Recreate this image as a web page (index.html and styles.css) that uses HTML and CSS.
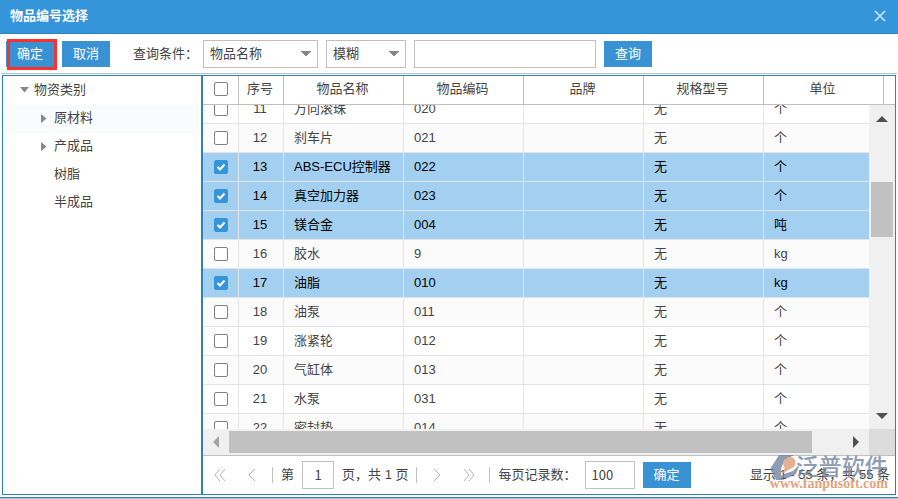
FILE: index.html
```html
<!DOCTYPE html>
<html lang="zh-CN">
<head>
<meta charset="utf-8">
<title>物品编号选择</title>
<link rel="stylesheet" href="styles.css">
</head>
<body>
<div class="dialog">
  <header class="titlebar">
    <h1>物品编号选择</h1>
    <button class="close" aria-label="关闭"><svg width="12" height="12" viewBox="0 0 12 12"><path d="M1 1 11 11M11 1 1 11" fill="none" stroke="#cfe6f8" stroke-width="1.6"/></svg></button>
  </header>

  <form class="toolbar">
    <div class="actions">
      <button type="button" class="btn marked">确定</button>
      <button type="button" class="btn">取消</button>
    </div>
    <label for="field">查询条件：</label>
    <select id="field" class="box field"><option>物品名称</option></select>
    <select class="box mode" aria-label="匹配方式"><option>模糊</option></select>
    <input class="box keyword" type="text" aria-label="关键字">
    <button type="button" class="btn">查询</button>
  </form>

  <main class="panes">
    <nav class="tree">
      <ul>
        <li class="root"><svg class="open" viewBox="0 0 9 6"><path d="M0 0h9L4.500 5.500z"/></svg>物资类别</li>
        <li class="current"><svg class="shut" viewBox="0 0 6 9"><path d="M0 0v9L5.500 4.500z"/></svg>原材料</li>
        <li><svg class="shut" viewBox="0 0 6 9"><path d="M0 0v9L5.500 4.500z"/></svg>产成品</li>
        <li class="leaf">树脂</li>
        <li class="leaf">半成品</li>
      </ul>
    </nav>

    <section class="grid">
      <div class="head">
        <table>
          <colgroup><col class="c-check"><col class="c-no"><col><col><col><col><col></colgroup>
          <thead><tr><th><input type="checkbox" aria-label="全选"></th><th>序号</th><th>物品名称</th><th>物品编码</th><th>品牌</th><th>规格型号</th><th>单位</th></tr></thead>
        </table>
      </div>
      <div class="body">
        <div class="rows">
          <table>
            <colgroup><col class="c-check"><col class="c-no"><col><col><col><col><col></colgroup>
            <tbody>
              <tr><td><input type="checkbox" aria-label="11"></td><td>11</td><td>万向滚珠</td><td>020</td><td></td><td>无</td><td>个</td></tr>
              <tr><td><input type="checkbox" aria-label="12"></td><td>12</td><td>刹车片</td><td>021</td><td></td><td>无</td><td>个</td></tr>
              <tr class="on"><td><input type="checkbox" aria-label="13" checked></td><td>13</td><td>ABS-ECU控制器</td><td>022</td><td></td><td>无</td><td>个</td></tr>
              <tr class="on"><td><input type="checkbox" aria-label="14" checked></td><td>14</td><td>真空加力器</td><td>023</td><td></td><td>无</td><td>个</td></tr>
              <tr class="on"><td><input type="checkbox" aria-label="15" checked></td><td>15</td><td>镁合金</td><td>004</td><td></td><td>无</td><td>吨</td></tr>
              <tr><td><input type="checkbox" aria-label="16"></td><td>16</td><td>胶水</td><td>9</td><td></td><td>无</td><td>kg</td></tr>
              <tr class="on"><td><input type="checkbox" aria-label="17" checked></td><td>17</td><td>油脂</td><td>010</td><td></td><td>无</td><td>kg</td></tr>
              <tr><td><input type="checkbox" aria-label="18"></td><td>18</td><td>油泵</td><td>011</td><td></td><td>无</td><td>个</td></tr>
              <tr><td><input type="checkbox" aria-label="19"></td><td>19</td><td>涨紧轮</td><td>012</td><td></td><td>无</td><td>个</td></tr>
              <tr><td><input type="checkbox" aria-label="20"></td><td>20</td><td>气缸体</td><td>013</td><td></td><td>无</td><td>个</td></tr>
              <tr><td><input type="checkbox" aria-label="21"></td><td>21</td><td>水泵</td><td>031</td><td></td><td>无</td><td>个</td></tr>
              <tr><td><input type="checkbox" aria-label="22"></td><td>22</td><td>密封垫</td><td>014</td><td></td><td>无</td><td>个</td></tr>
            </tbody>
          </table>
        </div>
        <div class="vbar">
          <svg width="12" height="6" viewBox="0 0 12 6"><path d="M0 6h12L6 0z"/></svg>
          <div class="vtrack"><div class="vthumb"></div></div>
          <svg width="12" height="6" viewBox="0 0 12 6"><path d="M0 0h12L6 6z"/></svg>
        </div>
        <div class="hbar">
          <svg width="6" height="12" viewBox="0 0 6 12"><path d="M6 0v12L0 6z" fill="#a3a3a3"/></svg>
          <div class="htrack"><div class="hthumb"></div></div>
          <svg width="6" height="12" viewBox="0 0 6 12"><path d="M0 0v12L6 6z"/></svg>
        </div>
        <div class="corner"></div>
      </div>

      <footer class="pager">
        <button class="nav" aria-label="首页"><svg width="12" height="12" viewBox="0 0 12 12"><path d="M6 0 1 6l5 6M11 0 6 6l5 6"/></svg></button>
        <button class="nav" aria-label="上一页"><svg width="12" height="12" viewBox="0 0 12 12"><path d="M9 0 3 6l6 6"/></svg></button>
        <i class="sep"></i>
        <label for="page">第</label>
        <input id="page" class="box page" type="text" value="1">
        <span>页，共 1 页</span>
        <i class="sep"></i>
        <button class="nav" aria-label="下一页"><svg width="12" height="12" viewBox="0 0 12 12"><path d="M3 0l6 6-6 6"/></svg></button>
        <button class="nav" aria-label="末页"><svg width="12" height="12" viewBox="0 0 12 12"><path d="M1 0l5 6-5 6M6 0l5 6-5 6"/></svg></button>
        <i class="sep"></i>
        <label for="size">每页记录数：</label>
        <input id="size" class="box size" type="text" value="100">
        <button class="btn">确定</button>
        <span class="total">显示 1 - 55 条，共 55 条</span>
        <div class="brand">
          <svg width="32" height="28" viewBox="0 0 32 28"><path d="M9 0h15Q13 5 11 14q-1 6 3 11H6L0 14z" fill="#7484a3"/><path d="M14 5Q22-1 25 5q2 7-5 9l-10 6q6-6 4-9-2-3 0-6z" fill="#e29c78"/><path d="M30 9l-4 10-8 4H10l4-4 9-3z" fill="#7484a3"/></svg>
          <b>泛普软件</b>
          <small>www.fanpusoft.com</small>
        </div>
      </footer>
    </section>
  </main>
</div>
</body>
</html>
```
FILE: styles.css
```css
* { box-sizing: border-box; }

body {
  margin: 0;
  background: #fff;
  color: #444;
  font: 13px/20px "Liberation Sans", "Noto Sans CJK SC", sans-serif;
}

button, input, select { font: inherit; color: inherit; margin: 0; }

.dialog {
  display: flex;
  flex-direction: column;
  height: 100vh;
  border-bottom: 1px solid #c0c4c8;
}

.titlebar {
  display: flex;
  align-items: center;
  justify-content: space-between;
  height: 34px;
  padding: 0 12px 2px 10px;
  background: #3595db;
  border-bottom: 1px solid #2d81be;
  color: #fff;
}
.titlebar h1 { margin: 0; font-size: 13px; line-height: 20px; }
.close { display: flex; padding: 0; border: 0; background: none; }

.toolbar {
  display: flex;
  align-items: center;
  gap: 8px;
  height: 40px;
  margin: 0 1px;
  padding: 0 5px;
  border-bottom: 1px solid #c0c0c0;
}
.actions { display: flex; gap: 8px; margin-right: 15px; }
.toolbar label { width: 62px; white-space: nowrap; }

.btn {
  width: 48px;
  height: 26px;
  padding: 0;
  border: 0;
  background: #3892d4;
  color: #fff;
}
.marked { position: relative; }
.marked::after {
  content: "";
  position: absolute;
  inset: -2px -3px -3px 1px;
  border: 3px solid #f9312f;
}

.box {
  height: 28px;
  padding: 0 6px;
  border: 1px solid #c0c0c0;
  border-radius: 0;
  background: #fff;
  outline: 0;
}
select.box {
  appearance: none;
  background: linear-gradient(to bottom left, #888 50%, transparent 50%) right 11px center / 5px 6px no-repeat,
              linear-gradient(to bottom right, #888 50%, transparent 50%) right 6px center / 5px 6px no-repeat, #fff;
}
.field { width: 115px; }
.mode { width: 80px; }
.keyword { width: 182px; }

.panes {
  display: flex;
  flex: 1;
  min-height: 0;
  margin: 1px 2px 2px;
  border: 1px solid #2d81be;
}

.dialog::after { content: ""; height: 1px; background: #2d81be; }

.tree { width: 200px; flex: none; border-right: 2px solid #2d81be; }
.tree ul { margin: 0 2px; padding: 1px 0 0; list-style: none; }
.tree li {
  display: flex;
  align-items: center;
  height: 28px;
  padding: 0 0 2px 36px;
}
.tree .root { padding-left: 15px; }
.tree .leaf { padding-left: 49px; }
.tree .current { background: #f8fcfd; }
.tree svg { fill: #888; }
.open { width: 9px; height: 6px; margin-right: 5px; }
.shut { width: 6px; height: 9px; margin-right: 7px; }

.grid { display: flex; flex-direction: column; flex: 1; min-width: 0; }

table { width: 681px; table-layout: fixed; border-collapse: separate; border-spacing: 0; }
.c-check { width: 36px; }
.c-no { width: 45px; }
th, td { padding: 0 10px; text-align: left; white-space: nowrap; }
td:first-child { padding: 0; }
td:nth-child(2) { padding: 0 2px 0 0; text-align: center; }

.head { border-bottom: 1px solid #c0c0c0; }
th { height: 28px; padding: 0 2px 2px 0; border-right: 1px solid #c0c0c0; text-align: center; font-weight: normal; }

.body {
  display: grid;
  grid-template: minmax(0, 1fr) 26px / minmax(0, 1fr) 26px;
  flex: 1;
  min-height: 0;
}
.rows { overflow: hidden; }
/* the list is scrolled partway into its first visible row */
.rows table { margin-top: -10px; }
td { height: 29px; border-right: 1px solid #e4e4e4; border-bottom: 1px solid #e4e4e4; }
td:nth-child(n+2) { padding-bottom: 1px; }
tr:nth-child(even) td { background: #fbfbfb; }
tr.on td { background: #a3d0f1; color: #000; }

input[type="checkbox"] {
  appearance: none;
  display: block;
  width: 14px;
  height: 14px;
  margin: 0 0 0 11px;
  border: 1px solid #808080;
  border-radius: 2px;
  background: #fff;
}
input[type="checkbox"]:checked {
  border-color: #3595db;
  background: #3595db url("data:image/svg+xml,%3Csvg xmlns='http://www.w3.org/2000/svg' viewBox='0 0 12 12'%3E%3Cpath d='M2.500 6 5 8.500 9.500 3.500' fill='none' stroke='white' stroke-width='2'/%3E%3C/svg%3E") center / 12px 12px;
}

.vbar, .hbar { display: flex; align-items: center; background: #f0f0f0; fill: #505050; }
.vbar { flex-direction: column; padding: 11px 0 10px; }
.vtrack { flex: 1; align-self: stretch; padding: 60px 2px 0; }
.vthumb { height: 55px; background: #c1c1c1; }
.hbar { padding: 0 10px; }
.htrack { flex: 1; padding: 0 41px 0 10px; }
.hthumb { height: 22px; background: #c1c1c1; }
.corner { background: #dcdcdc; }

.pager {
  position: relative;
  display: flex;
  align-items: center;
  height: 39px;
  padding: 0 5px 0 11px;
  border-top: 1px solid #c0c0c0;
  white-space: nowrap;
}
.pager .box, .pager .btn { padding-bottom: 2px; font-family: "Noto Sans CJK SC", sans-serif; }
.nav { display: flex; padding: 0; border: 0; margin-right: 20px; background: none; }
.nav svg { fill: none; stroke: #b4b4b4; }
.nav + .sep { margin-left: -6px; }
.sep { width: 1px; height: 16px; margin-right: 8px; background: #c0c0c0; }
.page { width: 32px; margin: 0 8px; text-align: center; }
.page + span { margin-right: 8px; }
.sep + .nav { margin-left: 6px; }
.size { width: 50px; margin: 0 8px; }
.total { margin-left: auto; }

.brand {
  position: absolute;
  right: 7px;
  bottom: 3px;
  display: grid;
  grid-template-columns: 26px auto;
  opacity: 0.8;
  pointer-events: none;
}
.brand svg { grid-area: 1 / 1; }
.brand b { grid-area: 1 / 2; color: #7484a3; font-size: 23px; font-weight: 500; line-height: 24px; }
.brand small {
  grid-column: 1 / 3;
  margin-top: -6px;
  color: #e08a60;
  font: bold 14px/14px "Liberation Serif", serif;
  text-align: right;
}
```
